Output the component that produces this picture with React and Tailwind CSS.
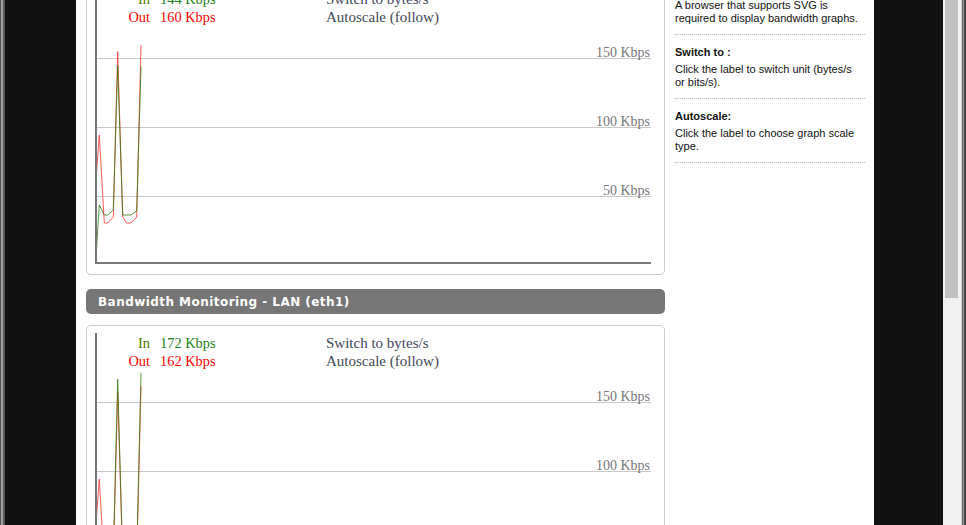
import React from 'react';

const graphs = [
  {
    inVal: '144 Kbps',
    outVal: '160 Kbps',
    red: [[1, 191], [4.3, 146], [9.3, 234], [12.7, 234], [18.3, 228], [22.7, 62.7], [27.7, 228], [31.7, 234], [36, 234], [41.7, 228], [46, 56]],
    green: [[1, 268], [4.3, 216], [9.3, 226], [12.7, 226], [18.3, 221], [22.7, 77], [27.7, 226], [36, 226], [41.7, 222], [46, 77.7]],
  },
  {
    inVal: '172 Kbps',
    outVal: '162 Kbps',
    red: [[1, 191], [4.3, 146], [9.3, 234], [12.7, 234], [18.3, 228], [22.7, 58.7], [27.7, 228], [31.7, 234], [36, 234], [41.7, 228], [46, 53]],
    green: [[1, 268], [4.3, 216], [9.3, 226], [12.7, 226], [18.3, 221], [22.7, 46.3], [27.7, 226], [36, 226], [41.7, 222], [46, 39.7]],
  },
];

const pts = (arr) => arr.map(([x, y]) => `${x},${y}`).join(' ');

const Graph = ({ g }) => (
  <div className="h-[294px] border border-[#ccc] rounded-[5px] pt-[7px] pl-[8px]">
    <svg width="556" height="276" style={{ fontFamily: '"Liberation Serif", serif' }}>
      {[69, 138, 207].map((y) => (
        <line key={y} x1="1" x2="556" y1={y + 0.5} y2={y + 0.5} stroke="#c8c8c8" strokeWidth="1" />
      ))}
      <text x="555" y="68" textAnchor="end" fontSize="14" fill="#777">150 Kbps</text>
      <text x="555" y="137" textAnchor="end" fontSize="14" fill="#777">100 Kbps</text>
      <text x="555" y="206" textAnchor="end" fontSize="14" fill="#777">50 Kbps</text>

      <polyline points={pts(g.red)} fill="none" stroke="#ff3030" strokeOpacity="0.8" strokeWidth="1" />
      <polyline points={pts(g.green)} fill="none" stroke="#2f7a10" strokeOpacity="0.8" strokeWidth="1" />

      <line x1="1" x2="1" y1="0" y2="275" stroke="#777" strokeWidth="2" />
      <line x1="0" x2="556" y1="274" y2="274" stroke="#777" strokeWidth="2" />

      <text x="55" y="14.5" textAnchor="end" fontSize="14.4" fill="#4a7a00">In</text>
      <text x="65" y="14.5" fontSize="14.4" fill="#1a801a">{g.inVal}</text>
      <text x="55" y="32.5" textAnchor="end" fontSize="14.4" fill="#ff0000">Out</text>
      <text x="65" y="32.5" fontSize="14.4" fill="#ff0000">{g.outVal}</text>
      <text x="231" y="14.5" fontSize="15" fill="#3f4756">Switch to bytes/s</text>
      <text x="231" y="32.5" fontSize="15" fill="#3f4756">Autoscale (follow)</text>
    </svg>
  </div>
);

const notes = [
  { title: 'Note:', lines: 'A browser that supports SVG is required to display bandwidth graphs.' },
  { title: 'Switch to :', lines: 'Click the label to switch unit (bytes/s or bits/s).' },
  { title: 'Autoscale:', lines: 'Click the label to choose graph scale type.' },
];

export default function App() {
  return (
    <div className="w-[966px] h-[525px] overflow-hidden flex bg-[#111] font-['Liberation_Sans',sans-serif]">
      <div className="w-[76px] flex shrink-0">
        <div className="w-[1px] bg-[#555]" />
        <div className="w-[2px] bg-[#a0a0a0]" />
        <div className="w-[2px] bg-[#5a5a5a]" />
      </div>

      <div className="w-[798px] shrink-0 bg-white px-[10px] flex items-start gap-[10px]">
        <div className="w-[579px] shrink-0 -mt-[19px]">
          <Graph g={graphs[0]} />
          <div className="mt-[14px] h-[25px] bg-[#767676] rounded-[5px] pl-[12px] flex items-center text-white text-[12px] font-bold tracking-[0.45px] font-['DejaVu_Sans',sans-serif]">
            Bandwidth Monitoring - LAN (eth1)
          </div>
          <div className="mt-[11px]">
            <Graph g={graphs[1]} />
          </div>
        </div>

        <div className="w-[190px] shrink-0 -mt-[29px] text-[11px] leading-[13px] text-[#111]">
          {notes.map((n) => (
            <div key={n.title} className="pt-[11px] pb-[9px] pr-[6px] border-b border-dotted border-[#bbb]">
              <div className="font-bold mb-[4px]">{n.title}</div>
              <div>{n.lines}</div>
            </div>
          ))}
        </div>
      </div>

      <div className="w-[69px] shrink-0" />

      <div className="w-[18px] shrink-0 bg-[#f0f0f0]">
        <div className="ml-[2px] w-[13px] h-[298px] bg-[#c1c1c1]" />
      </div>
      <div className="w-[5px] shrink-0 flex">
        <div className="w-[1px] bg-[#d0d0d0]" />
        <div className="w-[1px] bg-[#666]" />
        <div className="w-[1px] bg-[#999]" />
        <div className="w-[2px] bg-[#444]" />
      </div>
    </div>
  );
}
